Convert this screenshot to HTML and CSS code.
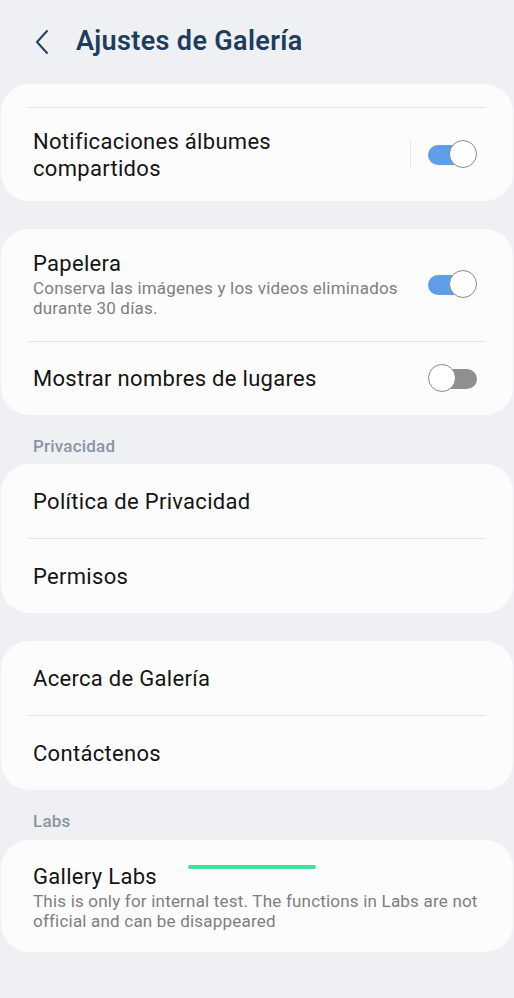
FILE: index.html
```html
<!DOCTYPE html>
<html lang="es">
<head>
<meta charset="utf-8">
<link rel="stylesheet" href="styles.css">
</head>
<body>
<div class="page">
  <header class="header">
    <svg class="back" width="16" height="26" viewBox="0 0 16 26"><path d="M13 2 L3 13 L13 24" fill="none" stroke="#23405f" stroke-width="2" stroke-linecap="round" stroke-linejoin="round"/></svg>
    <h1 class="title">Ajustes de Galería</h1>
  </header>

  <section class="card card-first">
    <div class="divider"></div>
    <div class="row row-tall">
      <div class="text">
        <div class="label">Notificaciones álbumes<br>compartidos</div>
      </div>
      <div class="vsep"></div>
      <div class="switch on"><span class="track"></span><span class="knob"></span></div>
    </div>
  </section>

  <section class="card">
    <div class="row row-sub">
      <div class="text">
        <div class="label">Papelera</div>
        <div class="sub">Conserva las imágenes y los videos eliminados<br>durante 30 días.</div>
      </div>
      <div class="switch on"><span class="track"></span><span class="knob"></span></div>
    </div>
    <div class="divider"></div>
    <div class="row row-last">
      <div class="text"><div class="label">Mostrar nombres de lugares</div></div>
      <div class="switch off"><span class="track"></span><span class="knob"></span></div>
    </div>
  </section>

  <div class="section-label">Privacidad</div>
  <section class="card">
    <div class="row"><div class="text"><div class="label">Política de Privacidad</div></div></div>
    <div class="divider"></div>
    <div class="row"><div class="text"><div class="label">Permisos</div></div></div>
  </section>

  <section class="card">
    <div class="row"><div class="text"><div class="label">Acerca de Galería</div></div></div>
    <div class="divider"></div>
    <div class="row"><div class="text"><div class="label">Contáctenos</div></div></div>
  </section>

  <div class="section-label labs-label">Labs</div>
  <section class="card labs">
    <div class="row row-sub row-labs">
      <div class="text">
        <div class="label">Gallery Labs</div>
        <div class="sub">This is only for internal test. The functions in Labs are not<br>official and can be disappeared</div>
      </div>
    </div>
    <span class="marker"></span>
  </section>
</div>
</body>
</html>
```
FILE: styles.css
```css
html, body {
  margin: 0;
  padding: 0;
  background: #eef0f4;
}
body {
  font-family: Roboto, "Noto Sans", "Liberation Sans", sans-serif;
  color: #141414;
  width: 514px;
  height: 998px;
  overflow: hidden;
}
.page {
  display: flex;
  flex-direction: column;
}
.header {
  height: 84px;
  display: flex;
  align-items: flex-start;
  padding-top: 27px;
  box-sizing: border-box;
}
.back {
  margin-left: 34px;
  margin-top: 2px;
}
.title {
  margin: 0 0 0 26px;
  font-size: 27px;
  line-height: 29px;
  font-weight: 600;
  color: #1e3d5e;
  letter-spacing: 0.35px;
}
.card {
  background: #fcfcfc;
  border-radius: 28px;
  margin: 0 1px 28px 1px;
  position: relative;
}
.card-first {
  padding-top: 23px;
}
.divider {
  height: 1px;
  background: #e4e4e6;
  margin: 0 27px;
}
.row {
  display: flex;
  align-items: center;
  min-height: 74px;
  padding: 0 36px 0 32px;
}
.row-tall {
  min-height: 93px;
}
.row-sub {
  min-height: 112px;
  padding-top: 0;
  padding-bottom: 2px;
  box-sizing: border-box;
}
.row-labs {
  padding-top: 2px;
  padding-bottom: 0;
}
.row-last {
  min-height: 73px;
}
.text {
  flex: 1;
  min-width: 0;
}
.label {
  font-size: 22px;
  line-height: 27px;
  letter-spacing: 0.3px;
  color: #141414;
}
.sub {
  font-size: 17px;
  line-height: 20px;
  letter-spacing: 0.2px;
  color: #7e7e80;
  margin-top: 1px;
  white-space: nowrap;
}
.vsep {
  width: 1px;
  height: 28px;
  background: #e6e6e8;
  margin-right: 17px;
}
.switch {
  width: 49px;
  height: 29px;
  position: relative;
  flex: none;
}
.switch .track {
  position: absolute;
  top: 5px;
  height: 20px;
  border-radius: 10px;
}
.switch .knob {
  position: absolute;
  top: 0;
  width: 26px;
  height: 26px;
  border-radius: 50%;
  background: #fff;
  border: 1.5px solid #8a8a8c;
}
.switch.on .track {
  left: 0;
  right: 6px;
  background: #5f9ee8;
}
.switch.on .knob {
  right: 0;
}
.switch.off .track {
  left: 6px;
  right: 0;
  background: #8f8f91;
}
.switch.off .knob {
  left: 0;
}
.section-label {
  font-size: 17px;
  line-height: 20px;
  letter-spacing: 0.2px;
  color: #8a94a2;
  padding-left: 33px;
  margin-top: -7px;
  margin-bottom: 8px;
  font-weight: 500;
}
.labs-label {
  margin-bottom: 9px;
}
.marker {
  position: absolute;
  left: 187px;
  top: 25px;
  width: 128px;
  height: 4px;
  border-radius: 2px;
  background: #3fe29b;
}
```
